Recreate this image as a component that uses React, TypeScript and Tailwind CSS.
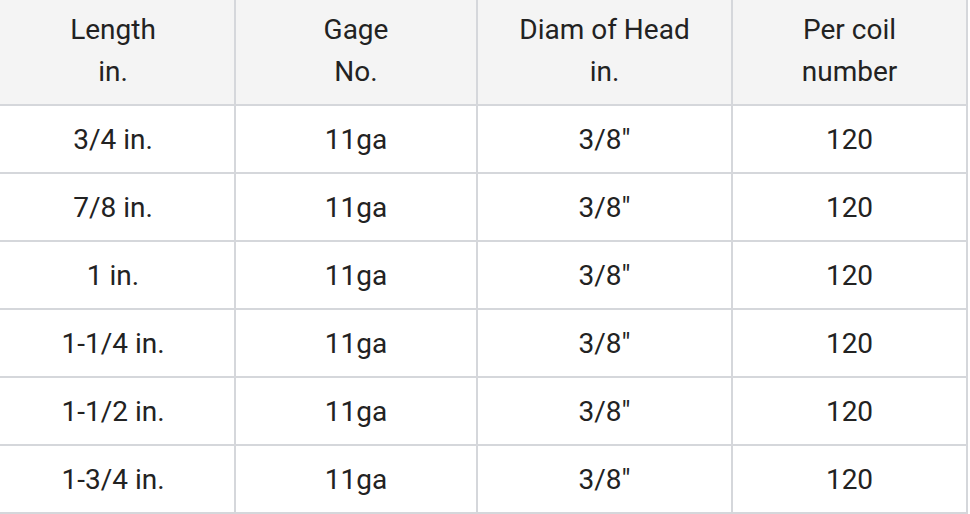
import React from "react";

const headers: [string, string][] = [
  ["Length", "in."],
  ["Gage", "No."],
  ["Diam of Head", "in."],
  ["Per coil", "number"],
];

const rows: string[][] = [
  ["3/4 in.", "11ga", '3/8"', "120"],
  ["7/8 in.", "11ga", '3/8"', "120"],
  ["1 in.", "11ga", '3/8"', "120"],
  ["1-1/4 in.", "11ga", '3/8"', "120"],
  ["1-1/2 in.", "11ga", '3/8"', "120"],
  ["1-3/4 in.", "11ga", '3/8"', "120"],
];

const widths = ["w-[244px]", "w-[242px]", "w-[255px]", "w-[235px]"];

export default function App() {
  return (
    <div className="w-[970px] h-[514px] bg-white overflow-hidden text-[#222222] font-['Roboto',_'Liberation_Sans',_sans-serif] text-[28px]">
      <div className="flex flex-col w-[976px] -ml-[8px]">
        <div className="flex h-[106px] bg-[#f4f4f4]">
          {headers.map((h, i) => (
            <div
              key={i}
              className={`${widths[i]} shrink-0 flex flex-col items-center justify-center border-r-2 border-b-2 border-[#d5d7db] leading-[42px] pb-[2px]`}
            >
              <span>{h[0]}</span>
              <span>{h[1]}</span>
            </div>
          ))}
        </div>
        {rows.map((r, ri) => (
          <div key={ri} className="flex h-[68px] bg-white">
            {r.map((c, ci) => (
              <div
                key={ci}
                className={`${widths[ci]} shrink-0 flex items-center justify-center border-r-2 border-b-2 border-[#d5d7db] pt-[2px]`}
              >
                {c}
              </div>
            ))}
          </div>
        ))}
      </div>
    </div>
  );
}
